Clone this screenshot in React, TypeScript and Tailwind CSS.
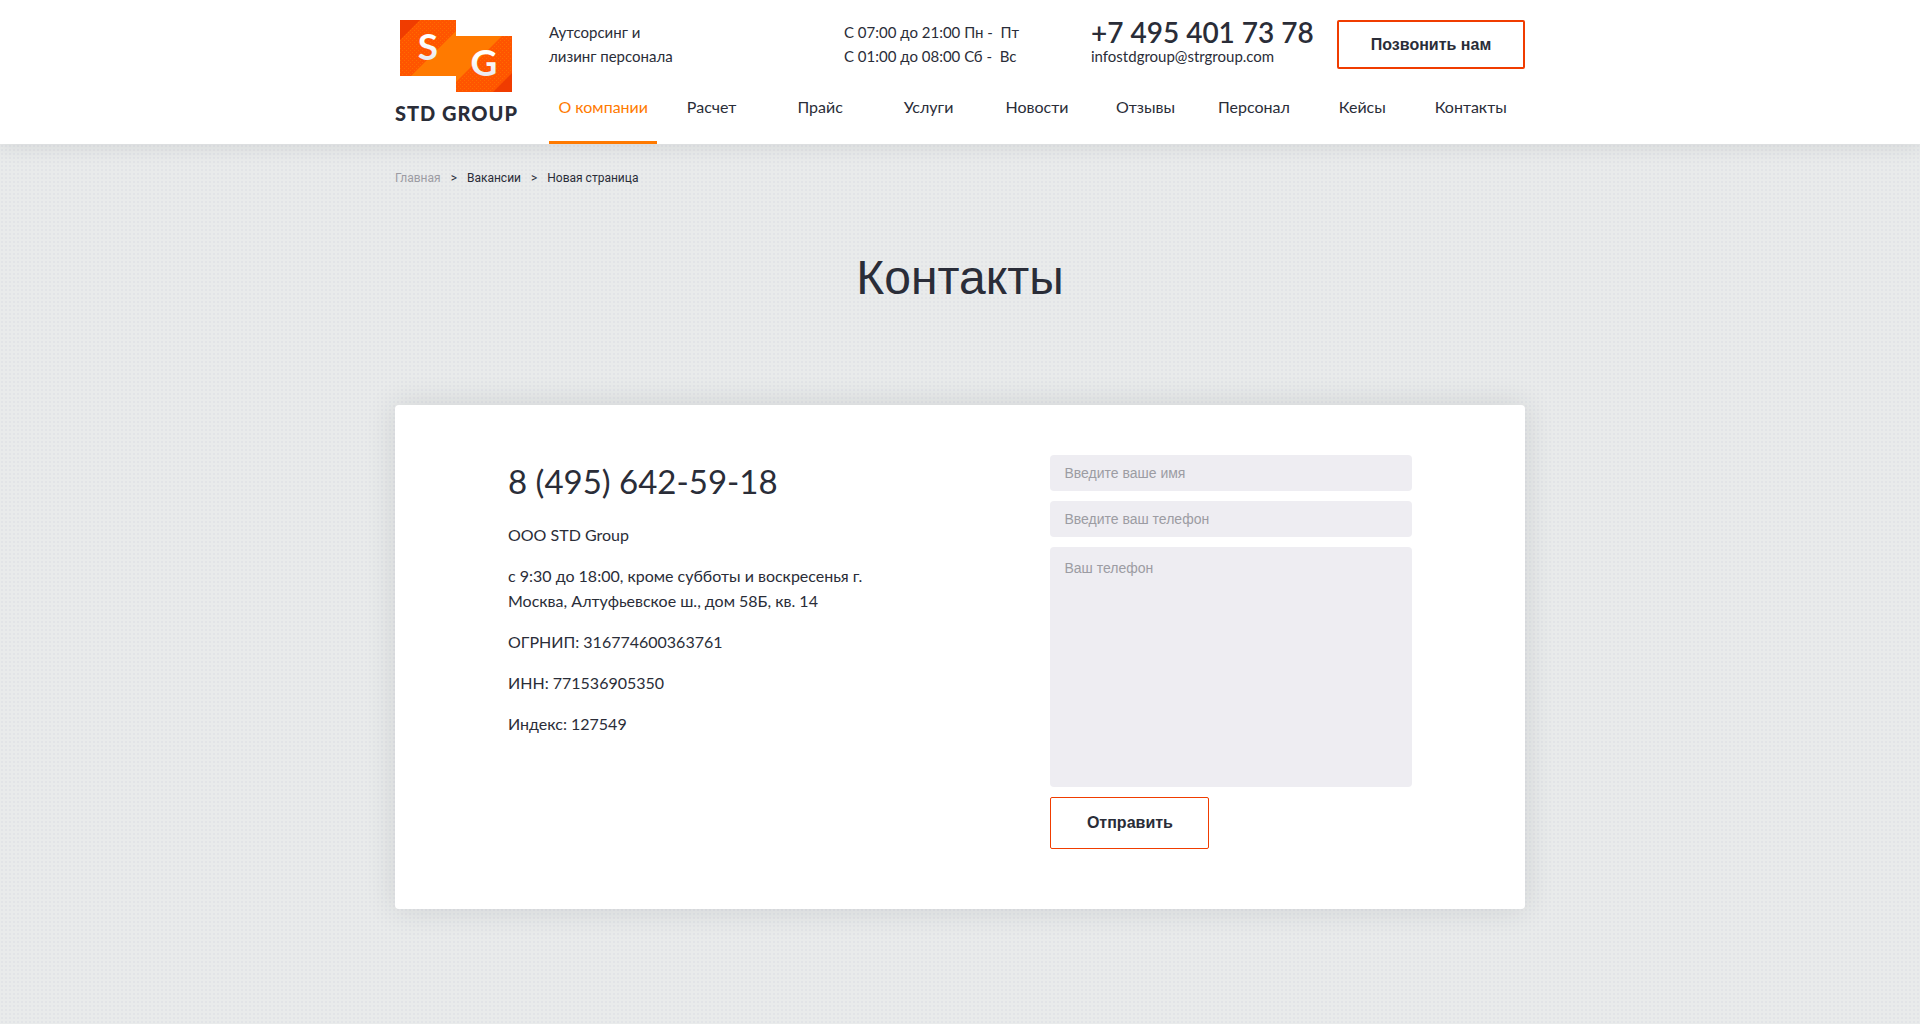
const navItems = [
  'О компании',
  'Расчет',
  'Прайс',
  'Услуги',
  'Новости',
  'Отзывы',
  'Персонал',
  'Кейсы',
  'Контакты',
];

function LogoMark() {
  return (
    <svg width="112" height="72" viewBox="0 0 112 72" aria-hidden="true">
      <defs>
        <linearGradient id="letter" x1="0" y1="0" x2="0" y2="1">
          <stop offset="0.4" stopColor="#ffffff" />
          <stop offset="1" stopColor="#dfe1e4" />
        </linearGradient>
        <pattern id="grain" width="4" height="4" patternUnits="userSpaceOnUse">
          <rect width="1" height="1" fill="#ff7a00" opacity="0.6" />
          <rect x="2" y="2" width="1" height="1" fill="#ff7a00" opacity="0.6" />
        </pattern>
      </defs>
      <path d="M0 0H56V16H112V72H56V56H0Z" fill="#ff7a00" />
      <path d="M0 0H56V11L11 56H0Z" fill="#ff5500" />
      <path d="M20 0H56V11L11 56H0V20Z" fill="url(#grain)" />
      <path d="M0 0H20L0 20Z" fill="#f03c00" />
      <path d="M112 16V72H56V62L102 16Z" fill="#ff5500" />
      <path d="M112 16V53L93 72H56V62L102 16Z" fill="url(#grain)" />
      <path d="M112 53V72H93Z" fill="#f03c00" />
      <text x="28" y="40" textAnchor="middle" fill="url(#letter)" className="font-['Lato',sans-serif] text-[37px] font-bold">S</text>
      <text x="84" y="56" textAnchor="middle" fill="url(#letter)" className="font-['Lato',sans-serif] text-[37px] font-bold">G</text>
    </svg>
  );
}

function Header() {
  return (
    <header className="relative bg-white shadow-[0_0_20px_rgba(42,45,56,0.13)]">
      <div className="mx-auto flex h-36 max-w-[1130px]">
        <a href="#" className="flex w-[154px] shrink-0 flex-col pt-5">
          <span className="pl-[5px]"><LogoMark /></span>
          <span className="mt-2 text-[20px] leading-[26px] font-black tracking-wider">STD GROUP</span>
        </a>
        <div className="flex grow flex-col justify-between">
          <div className="flex pt-5">
            <p className="w-[295px] text-[15px] leading-6">
              Аутсорсинг и<br />лизинг персонала
            </p>
            <p className="w-[247px] text-[15px] leading-6">
              С 07:00 до 21:00 Пн -&nbsp; Пт<br />С 01:00 до 08:00 Сб -&nbsp; Вс
            </p>
            <div className="flex flex-col">
              <a href="tel:+74954017378" className="text-[28px] leading-6 font-semibold">+7 495 401 73 78</a>
              <a href="mailto:infostdgroup@strgroup.com" className="text-[15px] leading-6">infostdgroup@strgroup.com</a>
            </div>
            <button type="button" className="ml-auto h-[49px] w-[188px] rounded-xs border-2 border-[#f03c00] font-['Liberation_Sans',sans-serif] text-[16px] font-bold">
              Позвонить нам
            </button>
          </div>
          <nav className="grid grid-cols-9 text-center text-[16px] leading-6">
            {navItems.map((item, i) => (
              <a
                key={item}
                href="#"
                className={
                  i === 0
                    ? 'border-b-3 border-[#ff7a00] pb-[22px] text-[#ff7a00]'
                    : 'border-b-3 border-transparent pb-[22px]'
                }
              >
                {item}
              </a>
            ))}
          </nav>
        </div>
      </div>
    </header>
  );
}

function ContactForm() {
  const field =
    "block w-full rounded bg-[#eeedf2] px-[14px] font-['Liberation_Sans',sans-serif] text-[14px] placeholder:text-[#9c9ca3] outline-none";
  return (
    <form className="flex w-2/5 flex-col items-start gap-[10px]">
      <input aria-label="Введите ваше имя" placeholder="Введите ваше имя" className={field + ' h-9'} />
      <input aria-label="Введите ваш телефон" type="tel" placeholder="Введите ваш телефон" className={field + ' h-9'} />
      <textarea aria-label="Ваш телефон" placeholder="Ваш телефон" className={field + ' h-60 resize-none py-3 leading-[18px]'} />
      <button type="submit" className="h-[52px] w-[159px] rounded-xs border border-[#f03c00] font-['Liberation_Sans',sans-serif] text-[16px] font-bold">
        Отправить
      </button>
    </form>
  );
}

export default function App() {
  return (
    <div className="min-h-screen bg-[#e9ebeb] bg-[radial-gradient(circle_at_center,#e2e4e7_1px,transparent_1px)] bg-size-[4px_4px] font-['Lato',sans-serif] text-[#2a2d38]">
      <Header />
      <main className="mx-auto max-w-[1130px] pb-[115px]">
        <nav aria-label="Путь" className="flex gap-[10px] pt-6 font-['Roboto',sans-serif] text-[12px] leading-5">
          <a href="#" className="text-[#9c9ca3]">Главная</a>
          <span>&gt;</span>
          <a href="#">Вакансии</a>
          <span>&gt;</span>
          <span>Новая страница</span>
        </nav>
        <h1 className="mt-[60px] text-center font-['Liberation_Sans',sans-serif] text-[48px] leading-[60px]">Контакты</h1>
        <section className="mt-[97px] flex justify-between rounded bg-white px-[10%] pt-[50px] pb-[60px] shadow-[0_0_30px_rgba(42,45,56,0.13)]">
          <div className="w-2/5 text-[16px] leading-[25px]">
            <h2 className="mb-[18px] pt-[3px] text-[33px] leading-[46px]">8 (495) 642-59-18</h2>
            <p className="mb-4">ООО STD Group</p>
            <p className="mb-4">с 9:30 до 18:00, кроме субботы и воскресенья г. Москва, Алтуфьевское ш., дом 58Б, кв. 14</p>
            <p className="mb-4">ОГРНИП: 316774600363761</p>
            <p className="mb-4">ИНН: 771536905350</p>
            <p>Индекс: 127549</p>
          </div>
          <ContactForm />
        </section>
      </main>
    </div>
  );
}
